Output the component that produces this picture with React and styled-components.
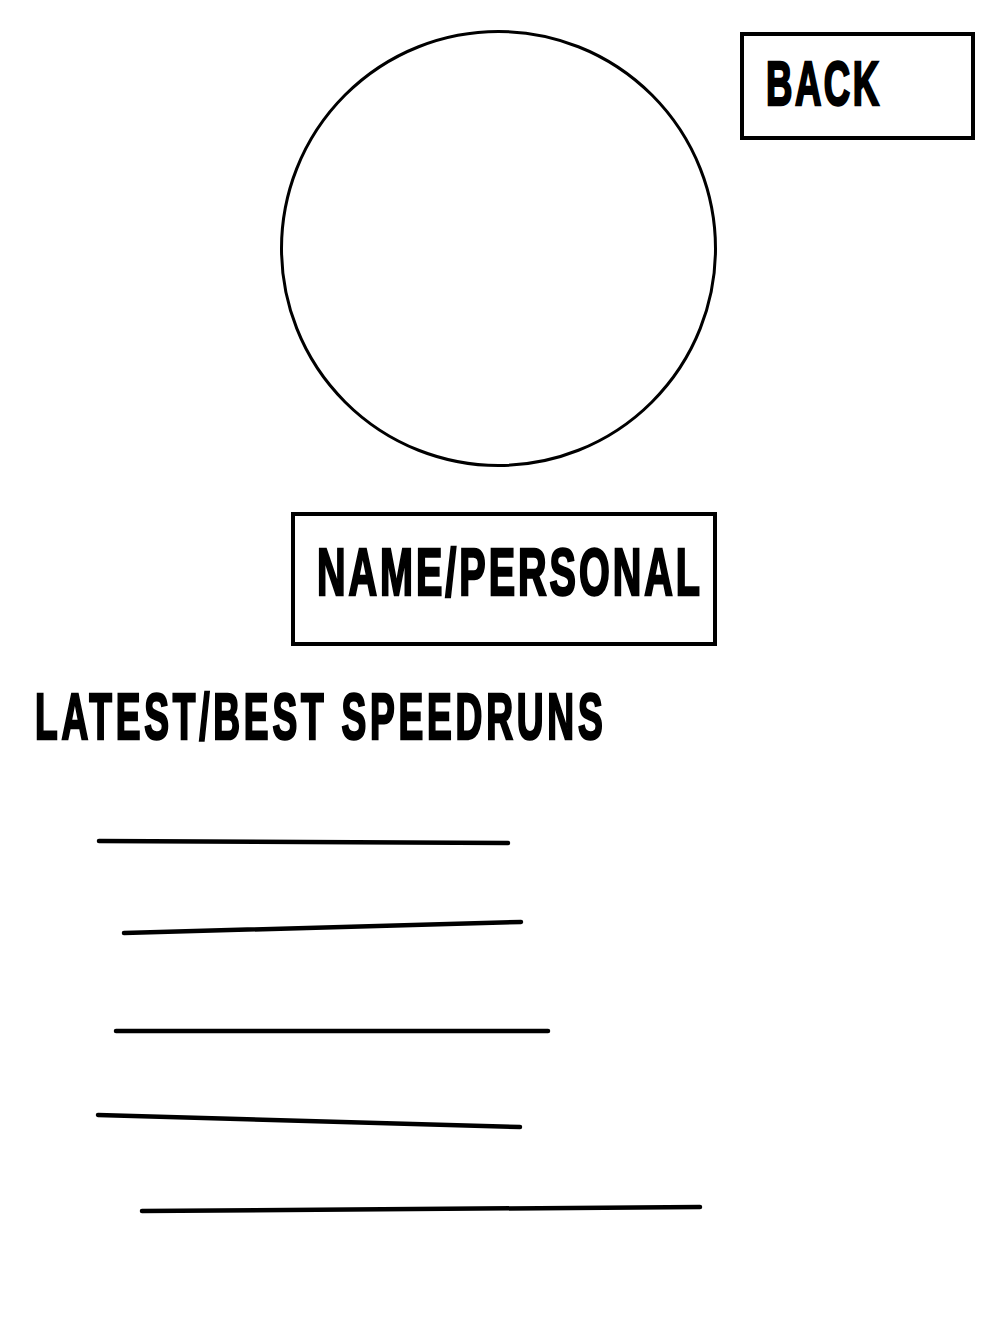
import React from 'react';
import styled, { createGlobalStyle } from 'styled-components';

const GlobalStyle = createGlobalStyle`
  html, body {
    margin: 0;
    padding: 0;
    background: #fff;
  }
  body {
    font-family: "Liberation Sans", "DejaVu Sans Condensed", sans-serif;
    color: #000;
  }
`;

const Page = styled.div`
  width: 996px;
  min-height: 1320px;
  background: #fff;
`;

const TopRow = styled.div`
  display: grid;
  grid-template-columns: 1fr 437px 1fr;
  align-items: start;
  padding-top: 30px;
`;

const Avatar = styled.div`
  grid-column: 2;
  width: 437px;
  height: 437px;
  box-sizing: border-box;
  border: 3.5px solid #000;
  border-radius: 50%;
`;

const Box = styled.div`
  box-sizing: border-box;
  border: 4px solid #000;
  width: ${p => p.$w}px;
  height: ${p => p.$h}px;
  padding: ${p => p.$pt}px 0 0 ${p => p.$pl}px;
`;

const BackBox = styled(Box)`
  grid-column: 3;
  justify-self: end;
  margin: 2px 21px 0 0;
  cursor: pointer;
`;

const NameBox = styled(Box)`
  margin: 45px 0 0 291px;
`;

const Label = styled.span`
  display: inline-block;
  font-weight: 700;
  font-size: ${p => p.$size}px;
  line-height: 1;
  white-space: nowrap;
  letter-spacing: ${p => p.$ls || 0}px;
  -webkit-text-stroke: 2.5px #000;
  transform: scaleX(${p => p.$sx});
  transform-origin: left top;
`;

const Heading = styled.h2`
  margin: 39px 0 0;
  padding-left: 35px;
  font-weight: 700;
  font-size: 64px;
  line-height: 1;
  height: 64px;
`;

const Sketch = styled.svg`
  display: block;
  width: 996px;
  height: 520px;
`;

const runs = [
  { x1: 99, y1: 92, x2: 508, y2: 94 },
  { x1: 124, y1: 184, x2: 521, y2: 173 },
  { x1: 116, y1: 282, x2: 548, y2: 282 },
  { x1: 98, y1: 366, x2: 520, y2: 378 },
  { x1: 142, y1: 462, x2: 700, y2: 458 },
];

export default function App() {
  return (
    <Page>
      <GlobalStyle />
      <TopRow>
        <Avatar />
        <BackBox $w={235} $h={108} $pt={16} $pl={22}>
          <Label $size={63} $sx={0.58} $ls={4.3}>BACK</Label>
        </BackBox>
      </TopRow>
      <NameBox $w={426} $h={134} $pt={23} $pl={22}>
        <Label $size={66} $sx={0.6} $ls={4.9}>NAME/PERSONAL</Label>
      </NameBox>
      <Heading>
        <Label $size={64} $sx={0.58} $ls={6.5}>LATEST/BEST SPEEDRUNS</Label>
      </Heading>
      <Sketch viewBox="0 0 996 520">
        {runs.map((r, i) => (
          <line key={i} {...r} stroke="#000" strokeWidth="4.5" strokeLinecap="round" />
        ))}
      </Sketch>
    </Page>
  );
}
